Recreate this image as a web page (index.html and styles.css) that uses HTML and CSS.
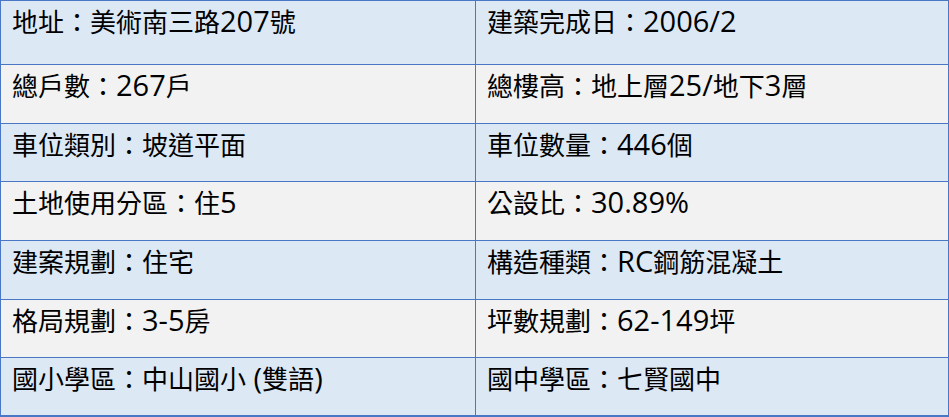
FILE: index.html
```html
<!DOCTYPE html>
<html lang="zh-Hant">
<head>
<meta charset="utf-8">
<title>建案資料</title>
<link rel="stylesheet" href="styles.css">
</head>
<body>
<div class="info-table">
  <div class="cell blue">地址：美術南三路<span class="lat">207</span>號</div>
  <div class="cell blue">建築完成日：<span class="lat">2006/2</span></div>
  <div class="cell grey">總戶數：<span class="lat">267</span>戶</div>
  <div class="cell grey">總樓高：地上層<span class="lat">25/</span>地下<span class="lat">3</span>層</div>
  <div class="cell blue">車位類別：坡道平面</div>
  <div class="cell blue">車位數量：<span class="lat">446</span>個</div>
  <div class="cell grey">土地使用分區：住<span class="lat">5</span></div>
  <div class="cell grey">公設比：<span class="lat">30.89%</span></div>
  <div class="cell blue">建案規劃：住宅</div>
  <div class="cell blue">構造種類：<span class="lat">RC</span>鋼筋混凝土</div>
  <div class="cell grey">格局規劃：<span class="lat">3-5</span>房</div>
  <div class="cell grey">坪數規劃：<span class="lat">62-149</span>坪</div>
  <div class="cell blue">國小學區：中山國小<span class="lat"> (</span>雙語<span class="lat">)</span></div>
  <div class="cell blue">國中學區：七賢國中</div>
</div>
</body>
</html>
```

FILE: styles.css
```css
html, body {
  margin: 0;
  padding: 0;
  background: #ffffff;
}

.info-table {
  display: grid;
  grid-template-columns: 474px 472px;
  grid-template-rows: 63px 58px 57px 58px 58px 57px 57px;
  gap: 1px;
  padding: 1px 1px 2px 1px;
  width: 949px;
  box-sizing: border-box;
  background: #4a76c6;
  font-family: "Noto Sans CJK TC", "Noto Sans", sans-serif;
  font-size: 26px;
  line-height: 30px;
  color: #000000;
}

.cell {
  padding: 5px 0 0 11px;
  white-space: nowrap;
  overflow: hidden;
}

.blue {
  background: #dde8f5;
}

.grey {
  background: #f2f2f2;
}

.lat {
  font-family: "Open Sans", "Noto Sans", sans-serif;
  font-size: 29px;
  line-height: 30px;
}
```
